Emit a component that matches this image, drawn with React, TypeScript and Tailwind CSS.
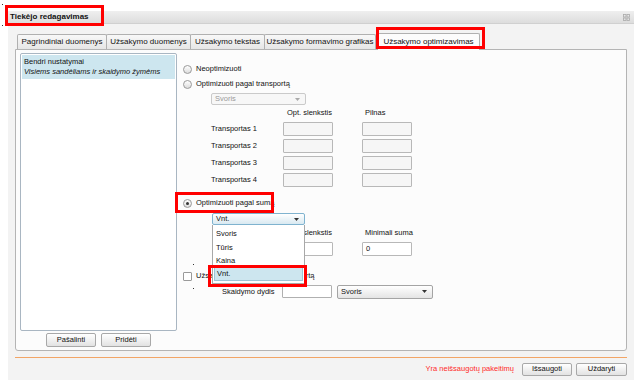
import React from "react";

const F = { fontFamily: '"Liberation Sans", Arial, sans-serif' };

function Arrow({ color = "#444" }: { color?: string }) {
  return (
    <svg width="5" height="3" viewBox="0 0 5 3">
      <path d="M0 0 L5 0 L2.5 3 Z" fill={color} />
    </svg>
  );
}

function Radio({ checked = false }: { checked?: boolean }) {
  return (
    <div className="w-[9px] h-[9px] rounded-full border border-[#9a9a9a] bg-gradient-to-b from-white to-[#dcdcdc] flex items-center justify-center shrink-0">
      {checked && <div className="w-[3px] h-[3px] rounded-full bg-[#333]" />}
    </div>
  );
}

function Input({ w, value = "", muted = false }: { w: string; value?: string; muted?: boolean }) {
  return (
    <div
      className={`${w} h-[14px] border border-[#b8b8b8] rounded-[1px] flex items-center pl-[3px] text-[7.5px] text-[#111] ${
        muted ? "bg-[#f6f6f6]" : "bg-white"
      }`}
    >
      {value}
    </div>
  );
}

function Tab({ label, w }: { label: string; w: string }) {
  return (
    <div
      className={`${w} h-[15px] border border-[#b0b0b0] border-b-0 rounded-t-[2px] bg-gradient-to-b from-[#f8f8f8] to-[#e6e6e6] flex items-center justify-center text-[8px] text-[#111] -mr-px`}
    >
      {label}
    </div>
  );
}

function Btn({ label, w = "w-[50px]", h = "h-[14px]" }: { label: string; w?: string; h?: string }) {
  return (
    <div
      className={`${w} ${h} border border-[#a8a8a8] rounded-[2px] bg-gradient-to-b from-white to-[#e2e2e2] flex items-center justify-center text-[7.5px] text-[#111]`}
    >
      {label}
    </div>
  );
}

export default function App() {
  return (
    <div className="w-[637px] h-[384px] bg-white relative overflow-hidden pt-[11px] pl-[8px]" style={F}>
      <div className="w-[626px] h-[369px] flex flex-col">
        {/* title bar */}
        <div className="h-[13px] bg-gradient-to-b from-[#efefef] to-[#dddddd] flex items-center pl-[2px] pr-[4px] border-b border-[#d0d0d0]">
          <span className="text-[8px] font-bold text-[#111] flex-1">Tiekėjo redagavimas</span>
          <svg width="7" height="7" viewBox="0 0 7 7">
            <rect x="0.5" y="0.5" width="2.5" height="2.5" fill="none" stroke="#aaa" strokeWidth="0.8" />
            <rect x="4" y="0.5" width="2.5" height="2.5" fill="none" stroke="#aaa" strokeWidth="0.8" />
            <rect x="0.5" y="4" width="2.5" height="2.5" fill="none" stroke="#aaa" strokeWidth="0.8" />
            <rect x="4" y="4" width="2.5" height="2.5" fill="none" stroke="#aaa" strokeWidth="0.8" />
          </svg>
        </div>
        {/* body */}
        <div className="flex-1 bg-[#f3f3f3] px-[7px] pt-[9px] flex flex-col">
          {/* tabs */}
          <div className="h-[16px] flex items-end pl-[2px] relative z-10">
            <Tab label="Pagrindiniai duomenys" w="w-[90px]" />
            <Tab label="Užsakymo duomenys" w="w-[85px]" />
            <Tab label="Užsakymo tekstas" w="w-[75px]" />
            <Tab label="Užsakymo formavimo grafikas" w="w-[112px]" />
            <div className="w-[103px] h-[17px] ml-[2px] border border-[#b0b0b0] border-b-0 rounded-t-[2px] bg-[#fcfcfc] flex items-center justify-center text-[8px] text-[#111] -mb-px">
              Užsakymo optimizavimas
            </div>
          </div>
          {/* panel */}
          <div className="w-[612px] h-[302px] border border-[#b4b4b4] rounded-b-[3px] bg-[#fcfcfc] flex pl-[4px] pt-[3px]">
            {/* left */}
            <div className="w-[157px] flex flex-col">
              <div className="h-[278px] border border-[#a9b6c2] rounded-[2px] bg-white p-px">
                <div className="h-[24px] bg-[#cde6ef] px-[2px] pt-[2px] text-[7.5px] leading-[10px] text-[#111]">
                  <div>Bendri nustatymai</div>
                  <div className="italic">Visiems sandėliams ir skaidymo žymėms</div>
                </div>
              </div>
              <div className="mt-[2px] flex justify-center gap-[5px]">
                <Btn label="Pašalinti" />
                <Btn label="Pridėti" />
              </div>
            </div>
            {/* right */}
            <div className="ml-[4px] flex flex-col text-[7.5px] text-[#111]">
              <div className="mt-[11px] h-[10px] flex items-center gap-[4px] ml-[2px]">
                <Radio />
                <span>Neoptimizuoti</span>
              </div>
              <div className="mt-[5px] h-[10px] flex items-center gap-[4px] ml-[2px]">
                <Radio />
                <span>Optimizuoti pagal transportą</span>
              </div>
              <div className="mt-[4px] ml-[30px] w-[95px] h-[12px] border border-[#cacaca] rounded-[2px] bg-[#f7f7f7] flex items-center pl-[3px] pr-[5px] text-[#9a9a9a]">
                <span className="flex-1">Svoris</span>
                <Arrow color="#aaa" />
              </div>
              <div className="mt-[3px] h-[10px] ml-[30px] flex items-center">
                <div className="w-[72px]" />
                <div className="w-[79px] pl-[4px]">Opt. slenkstis</div>
                <div className="pl-[3px]">Pilnas</div>
              </div>
              <div className="mt-[4px] ml-[30px] flex flex-col gap-[3px]">
                {[1, 2, 3, 4].map((n) => (
                  <div key={n} className="h-[14px] flex items-center">
                    <div className="w-[72px]">Transportas {n}</div>
                    <Input w="w-[50px]" muted />
                    <div className="w-[29px]" />
                    <Input w="w-[50px]" muted />
                  </div>
                ))}
              </div>
              <div className="mt-[11px] h-[10px] flex items-center gap-[4px] ml-[2px]">
                <Radio checked />
                <span>Optimizuoti pagal sumą</span>
              </div>
              <div className="mt-[5px] ml-[31px] w-[93px] h-[12px] relative z-20">
                <div className="w-full h-full border border-[#7fb3cf] rounded-[2px] bg-gradient-to-b from-white to-[#d9e9f1] flex items-center pl-[3px] pr-[5px]">
                  <span className="flex-1">Vnt.</span>
                  <Arrow color="#333" />
                </div>
                <div className="absolute left-0 top-[12px] w-[93px] h-[59px] bg-white border-x border-b border-[#a8a8a8] flex flex-col pt-[2px]">
                  <div className="h-[14px] flex items-center pl-[3px]">Svoris</div>
                  <div className="h-[13px] flex items-center pl-[3px]">Tūris</div>
                  <div className="h-[13px] flex items-center pl-[3px]">Kaina</div>
                  <div className="h-[14px] mx-px flex items-center pl-[2px] bg-[#cde6ef] border border-[#9cc6d8]">Vnt.</div>
                </div>
              </div>
              <div className="mt-[3px] h-[10px] ml-[30px] flex items-center">
                <div className="w-[72px]" />
                <div className="w-[79px] pl-[4px]">Opt. slenkstis</div>
                <div className="pl-[3px]">Minimali suma</div>
              </div>
              <div className="mt-[4px] ml-[30px] h-[14px] flex items-center">
                <div className="w-[72px]" />
                <Input w="w-[50px]" />
                <div className="w-[29px]" />
                <Input w="w-[50px]" value="0" />
              </div>
              <div className="mt-[15px] h-[10px] flex items-center gap-[4px] ml-[2px]">
                <div className="w-[9px] h-[9px] border border-[#9a9a9a] bg-white rounded-[1px]" />
                <span>Užsakymą skaidyti pagal transportą</span>
              </div>
              <div className="mt-[4px] h-[13px] flex items-center ml-[41px]">
                <div className="w-[60px]">Skaidymo dydis</div>
                <div className="w-[50px] h-[13px] border border-[#b0b0b0] bg-white rounded-[1px]" />
                <div className="ml-[5px] w-[96px] h-[14px] border border-[#a4a4a4] rounded-[2px] bg-gradient-to-b from-white to-[#e4e4e4] flex items-center pl-[3px] pr-[5px]">
                  <span className="flex-1">Svoris</span>
                  <Arrow color="#333" />
                </div>
              </div>
            </div>
          </div>
          {/* orange line */}
          <div className="mt-[6px] h-px w-[612px] bg-[#f2a566]" />
          {/* footer */}
          <div className="mt-[4px] h-[14px] w-[612px] flex items-center justify-end gap-[4px]">
            <span className="text-[7.5px] text-[#ff2a2a] mr-[4px]">Yra neišsaugotų pakeitimų</span>
            <Btn label="Išsaugoti" w="w-[50px]" h="h-[13px]" />
            <Btn label="Uždaryti" w="w-[51px]" h="h-[13px]" />
          </div>
        </div>
      </div>

      {/* annotation boxes */}
      <div className="absolute left-[5px] top-[5px] w-[99px] h-[21px] border-[3px] border-[#ff0000]" />
      <div className="absolute left-[376px] top-[27px] w-[109px] h-[22px] border-[3px] border-[#ff0000] z-30" />
      <div className="absolute left-[175px] top-[192px] w-[99px] h-[21px] border-[3px] border-[#ff0000]" />
      <div className="absolute left-[208px] top-[265px] w-[99px] h-[22px] border-[3px] border-[#ff0000] z-30" />
      <div className="absolute left-[2px] top-[4px] w-px h-px bg-[#333]" />
      <div className="absolute left-[2px] top-[25px] w-px h-px bg-[#333]" />
      <div className="absolute left-[193px] top-[264px] w-px h-px bg-[#333]" />
      <div className="absolute left-[193px] top-[288px] w-px h-px bg-[#333]" />
    </div>
  );
}
